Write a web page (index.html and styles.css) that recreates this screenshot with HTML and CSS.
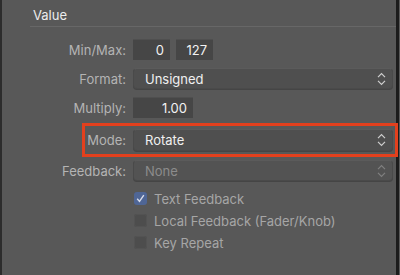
FILE: index.html
```html
<!DOCTYPE html>
<html lang="en">
<head>
  <meta charset="UTF-8" />
  <meta name="viewport" content="width=device-width, initial-scale=1.0"/>
  <title>Value</title>
  <link rel="stylesheet" href="styles.css">
</head>
<body>
  <div class="panel">
    <div class="section-title">Value</div>

    <div class="fields">
      <div class="row">
        <span class="label">Min/Max:</span>
        <div class="pair">
          <span class="field narrow">0</span>
          <span class="field narrow">127</span>
        </div>
      </div>

      <div class="row">
        <span class="label">Format:</span>
        <div class="popup">
          <span>Unsigned</span>
          <svg class="chevrons" width="9" height="14" viewBox="0 0 9 14"><path d="M1 5.2 L4.5 1.7 L8 5.2 M1 8.8 L4.5 12.3 L8 8.8"/></svg>
        </div>
      </div>

      <div class="row">
        <span class="label">Multiply:</span>
        <div class="pair">
          <span class="field wide">1.00</span>
        </div>
      </div>

      <div class="row mode-row">
        <span class="label">Mode:</span>
        <div class="popup tall">
          <span>Rotate</span>
          <svg class="chevrons" width="9" height="14" viewBox="0 0 9 14"><path d="M1 5.2 L4.5 1.7 L8 5.2 M1 8.8 L4.5 12.3 L8 8.8"/></svg>
        </div>
        <div class="highlight"></div>
      </div>

      <div class="row">
        <span class="label">Feedback:</span>
        <div class="popup disabled">
          <span>None</span>
          <svg class="chevrons" width="9" height="14" viewBox="0 0 9 14"><path d="M1 5.2 L4.5 1.7 L8 5.2 M1 8.8 L4.5 12.3 L8 8.8"/></svg>
        </div>
      </div>

      <div class="checks">
        <label class="check">
          <span class="box checked">
            <svg width="13" height="13" viewBox="0 0 13 13"><path d="M3.2 6.8 L5.5 9.4 L9.8 3.2"/></svg>
          </span>
          Text Feedback
        </label>
        <label class="check">
          <span class="box"></span>
          Local Feedback (Fader/Knob)
        </label>
        <label class="check">
          <span class="box"></span>
          Key Repeat
        </label>
      </div>
    </div>
  </div>
</body>
</html>
```

FILE: styles.css
```css
body {
  margin: 0;
  background: #585858;
  font-family: 'Inter', 'Liberation Sans', sans-serif;
  font-size: 13px;
  color: #e6e6e6;
}

.panel {
  width: 394px;
  height: 275px;
  background: #585858;
  border-left: 2px solid #2c2c2c;
  border-right: 3px solid #1c1c1c;
}

.section-title {
  margin-left: 28px;
  padding: 7px 0 3px 3px;
  line-height: 16px;
  color: #ececec;
  border-bottom: 1px solid #676767;
}

.fields {
  padding: 12px 3px 0 0;
  display: flex;
  flex-direction: column;
  gap: 8px;
}

.row {
  display: grid;
  grid-template-columns: 124px 1fr;
  column-gap: 7px;
  align-items: center;
  height: 21px;
}

.label {
  text-align: right;
  color: #b4b4b4;
}

.pair {
  display: flex;
  gap: 6px;
}

.field {
  box-sizing: border-box;
  height: 21px;
  line-height: 21px;
  padding-right: 6px;
  text-align: right;
  background: #464646;
  border-top: 1px solid #4f4f4f;
  color: #f2f2f2;
}

.field.narrow {
  width: 37px;
}

.field:nth-child(2) {
  width: 37px;
}

.field.wide {
  width: 60px;
}

.popup {
  box-sizing: border-box;
  height: 21px;
  display: flex;
  align-items: center;
  justify-content: space-between;
  padding: 0 6px 0 11px;
  background: #4f4f4f;
  border-radius: 4px;
  border: 1px solid #4a4a4a;
  border-top-color: #5b5b5b;
  box-shadow: 0 1px 0 #454545;
  color: #f0f0f0;
}

.popup.tall {
  height: 22px;
}

.chevrons path {
  fill: none;
  stroke: #cfcfcf;
  stroke-width: 1.2;
}

.popup.disabled {
  background: #535353;
  color: #8c8c8c;
}

.popup.disabled .chevrons path {
  stroke: #808080;
}

.mode-row {
  position: relative;
  height: 22px;
  margin: 3px 0 1px;
}

.highlight {
  position: absolute;
  left: 80px;
  top: -6px;
  width: 310px;
  height: 28px;
  border: 3px solid #e3401d;
}

.checks {
  padding: 3px 0 0 132px;
  display: flex;
  flex-direction: column;
  gap: 9px;
}

.check {
  display: flex;
  align-items: center;
  gap: 7px;
  height: 13px;
  color: #a6a6a6;
}

.box {
  width: 13px;
  height: 13px;
  border-radius: 3px;
  background: #4d4d4d;
  box-shadow: inset 0 0 0 1px #535353;
}

.box.checked {
  background: #4f6696;
  box-shadow: none;
}

.box svg path {
  fill: none;
  stroke: #d8dcea;
  stroke-width: 1.4;
}
```
